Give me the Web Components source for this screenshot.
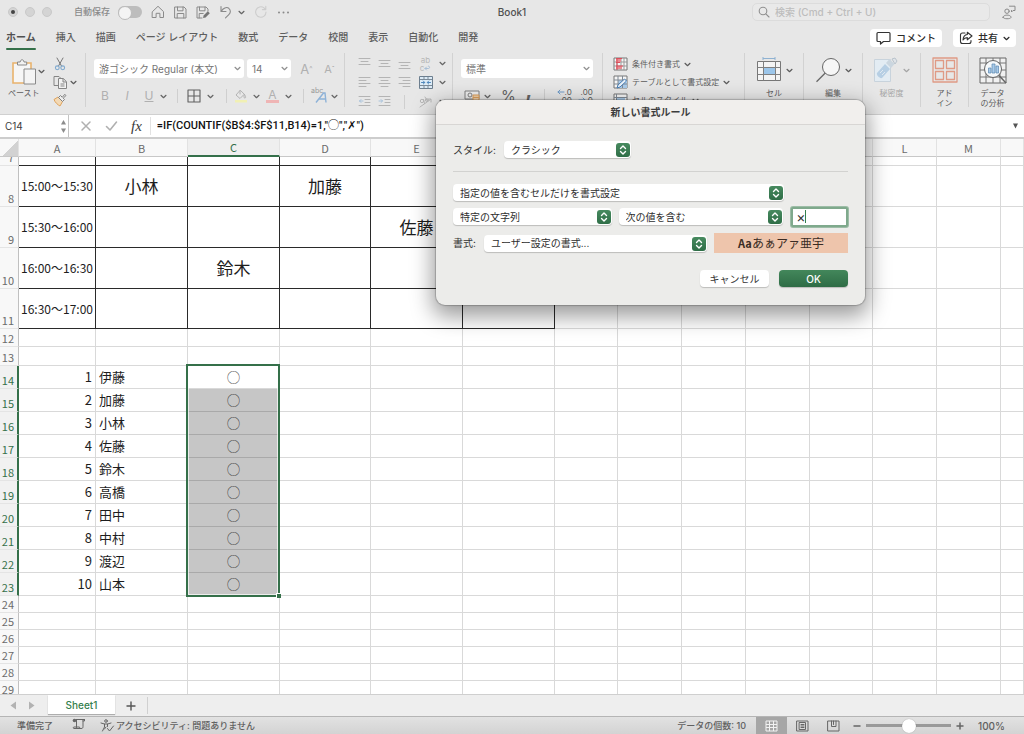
<!DOCTYPE html>
<html lang="ja">
<head>
<meta charset="utf-8">
<meta name="viewport" content="width=device-width, initial-scale=1">
<title>Book1</title>
<style>
html,body{margin:0;height:100%;overflow:hidden}
body{font:10px/14px "Inter","Noto Sans CJK JP",sans-serif;color:#4a4a4a;background:#e7e7e7}
</style>
</head>
<body>
<xl-app></xl-app>
<script>
const base = `
*{box-sizing:border-box}
button{font:inherit;color:inherit;background:none;border:0;padding:0;margin:0;display:inline-flex;align-items:center;justify-content:center;white-space:nowrap}
select,input{font:inherit;color:inherit;margin:0;outline:0}
[hidden]{display:none}
`;
const define = (name, css, html) => {
  const t = document.createElement('template');
  t.innerHTML = `<style>${base}${css}</style>${html}`;
  customElements.define(name, class extends HTMLElement {
    constructor() {
      super();
      this.attachShadow({mode: 'open'}).append(t.content.cloneNode(true));
    }
  });
};

/* Icons: [width, height, svg body] */
const S = (c, body, w = 1) => `<g fill="none" stroke="${c}" stroke-width="${w}" stroke-linecap="round" stroke-linejoin="round">${body}</g>`;
const lines = (a) => S('#b4b4b4', a.map(([x1, x2, y]) => `<path d="M${x1} ${y}H${x2}"/>`).join(''));
const icons = {
  chev: [7, 7, S('currentColor', '<path d="M1 2.3l2.5 2.4L6 2.3"/>', 1.2)],
  home: [14, 14, S('#8a8a8a', '<path d="M1.500 6.600L7 1.300l5.500 5.300V12.500H8.900V8.300H5.100v4.200H1.500z"/>')],
  save: [13, 13, S('#8a8a8a', '<path d="M1 1h9l2 2v9H1z"/><path d="M3.500 1v3.800h5.500V1M3.200 12V7.500h6.600V12"/>')],
  saveas: [14, 13, S('#8a8a8a', '<path d="M6 12H1V1h9l2 2v2"/><path d="M3.500 1v3.800h5.500V1M3.200 12V7.500h4"/>') + '<path d="M7 12l.6-2.600L11.800 5.200l2 2L9.600 11.400z" fill="#777"/>'],
  undo: [14, 14, S('#8a8a8a', '<path d="M2 1.500v5h5M2.300 6.200C4 3.300 7.500 1.500 9.800 3.300c2.400 2 1.700 4.700 0 6.300L6.500 12.800"/>', 1.1)],
  redo: [14, 14, S('#cdcdcd', '<path d="M12 7a5.200 5.200 0 1 1-2-4.100L11.500 4.500M11.800 1.200v3.400H8.400"/>', 1.1)],
  dots: [13, 5, '<g fill="#8a8a8a"><circle cx="2" cy="2.500" r="1"/><circle cx="6.500" cy="2.500" r="1"/><circle cx="11" cy="2.500" r="1"/></g>'],
  search: [12, 12, S('#909090', '<circle cx="5" cy="5" r="3.800"/><path d="M7.800 7.800L11 11"/>', 1.1)],
  person: [14, 15, S('#8a8a8a', '<circle cx="5" cy="6.200" r="2.200"/><path d="M1 12.300c0-3 8-3 8 0 0 2-8 2-8 0zM7.500 1.200h5.500v4.300h-2L9.500 7V5.500"/>')],
  comment: [15, 14, S('#333', '<path d="M2 1.500h11c.6 0 1 .4 1 1v7c0 .6-.4 1-1 1H7.500L4.500 13v-2.500H2c-.6 0-1-.4-1-1v-7c0-.6.400-1 1-1z"/>', 1.2)],
  share: [14, 14, S('#333', '<path d="M6 2H3.500C2.300 2 1.500 2.800 1.500 4v6.500c0 1.200.8 2 2 2H10c1.200 0 2-.8 2-2V9.500"/><path d="M8.300 1.200L13 5 8.300 8.800V6.600C6.300 6.600 5 7.400 4 9c.2-3 1.600-5.200 4.300-5.500z"/>', 1.1)],
  paste: [26, 26, '<path d="M2 4h18v20H2z" fill="#f6f6f6" stroke="#e9b36d" stroke-width="1.600"/><path d="M6.500 6V3h2.700c.3-3 3.500-3 3.800 0h2.700v3z" fill="#f2f2f2" stroke="#8a8a8a"/><path d="M13 10h11.500v15H13z" fill="#f4f4f4" stroke="#8a8a8a"/>'],
  cut: [12, 14, S('#777', '<path d="M3 1l4.500 8M9 1L4.500 9"/>') + S('#7fa9cf', '<circle cx="3.300" cy="10.800" r="1.900"/><circle cx="8.700" cy="10.800" r="1.900"/>', 1.1)],
  copy: [15, 14, S('#858585', '<path d="M5 10.500H1v-9h5l2 2"/>') + '<path d="M5.500 3.500h4.800l3.200 3.200v6.800h-8zM10 3.700V7h3.300M7.500 9h4M7.500 11h4" fill="#f2f2f2" stroke="#858585"/>'],
  brush: [14, 14, '<path d="M1 6.500l4-2.500 4.500 4.500L7 13C5 12 2 9.500 1 6.500z" fill="#f3d9b5" stroke="#dfa35c"/><path d="M5.500 4.500l2-2L9.300 4.300 11.800 1.300l1.200 1.200L10.200 5.200l1.300 1.300-2 2z" fill="#eee" stroke="#808080"/>'],
  borders: [14, 14, S('#606060', '<path d="M1 1h12v12H1zM7 1v12M1 7h12"/>', 1.1)],
  fill: [14, 14, S('#b4b4b4', '<path d="M6 1.500L2 6l4 3.500L10 5.500zM6 1.500V5M10.500 5.500c1.500 2 1.500 3.500.3 3.500s-1-1.500-.3-3.500"/>') + '<path d="M1 11h12v2.500H1z" fill="#f1f0b4"/>'],
  phonetic: [16, 16, '<path d="M3 14.500L10.500 5h1.500l1 9.500M6 11h6.500" fill="none" stroke="#8db2d8" stroke-width="1.400"/>'],
  alT: [13, 13, lines([[1, 12, 1.5], [3, 10, 4.5], [1, 12, 7.5]])],
  alM: [13, 13, lines([[1, 12, 3.5], [3, 10, 6.5], [1, 12, 9.5]])],
  alB: [13, 13, lines([[1, 12, 5.5], [3, 10, 8.5], [1, 12, 11.5]])],
  alL: [13, 13, lines([[1, 12, 1.5], [1, 8, 4.5], [1, 12, 7.5], [1, 8, 10.5]])],
  alC: [13, 13, lines([[1, 12, 1.5], [3, 10, 4.5], [1, 12, 7.5], [3, 10, 10.5]])],
  alR: [13, 13, lines([[1, 12, 1.5], [5, 12, 4.5], [1, 12, 7.5], [5, 12, 10.5]])],
  outdent: [13, 13, lines([[1, 12, 1.5], [7, 12, 4.5], [7, 12, 7.5], [1, 12, 10.5]]) + S('#a9c3dc', '<path d="M5 6H1.500M3 4.500L1.500 6 3 7.500"/>')],
  indent: [13, 13, lines([[1, 12, 1.5], [7, 12, 4.5], [7, 12, 7.5], [1, 12, 10.5]]) + S('#a9c3dc', '<path d="M1 6h3.500M3 4.500L4.500 6 3 7.500"/>')],
  wrapArrow: [7, 6, S('#a9bfd6', '<path d="M1 3.500h3.500c1.500 0 1.500-2.500 0-2.500M2.500 2L1 3.500 2.500 5"/>')],
  merge: [14, 13, '<path d="M.5.5h13v12H.5z" fill="#dcebf6" stroke="#6d7f8f"/><path d="M1 3.500h12M1 9.500h12M5 1v2.500M9 1v2.500M5 9.500V12M9 9.500V12" stroke="#7c8b98"/>' + S('#4f88bd', '<path d="M2.500 6.500h3M8.500 6.500h3M4.300 5L5.800 6.500 4.300 8M9.700 5L8.200 6.500 9.700 8"/>')],
  orient: [15, 13, S('#b8b8b8', '<path d="M2 12L12.500 4.500M10 4h3v3"/><circle cx="4" cy="6" r="1.700"/><path d="M5.500 4.500l1 4M7 2l2.500 4"/><circle cx="8.800" cy="5" r="1.400"/>')],
  currency: [16, 12, '<path d="M1 1h14v8H1z" fill="#eee" stroke="#808080"/><circle cx="6" cy="5" r="2" fill="none" stroke="#808080"/><path d="M9 5h6v6H9z" fill="#f0cfa6" stroke="#dd9f5b"/><path d="M9 7.500h6" stroke="#dd9f5b"/>'],
  cond: [15, 14, '<path d="M1 1h13v12H1z" fill="#f6f6f6" stroke="#777"/><path d="M4 1v12M8 1v12M11 1v12M1 5h13M1 9h13" stroke="#999"/><path d="M3 2h5v3H3zM3 9h6v3H3z" fill="#e98b92"/><path d="M4 1v12M3 1.500h6M3 5.500h4M3 9h7" stroke="#d9505c"/>'],
  tstyle: [15, 14, '<path d="M1 1h13v12H1z" fill="#f6f6f6" stroke="#777"/><path d="M5 5h9v8H5z" fill="#a9cbea"/><path d="M5 1v12M9.500 1v12M1 5h13M1 9h13" stroke="#808a95"/><path d="M4 13l1-3 6.500-6 2 2L7 12z" fill="#e8f0f8" stroke="#4a7fb5"/>'],
  cstyle: [15, 14, '<path d="M1 1h13v12H1z" fill="#f6f6f6" stroke="#777"/><path d="M3 5h9v6H3z" fill="#a9cbea"/><path d="M1 4.500h13M3.500 1v12" stroke="#808a95"/>'],
  cells: [26, 26, '<path d="M1.500 4.500h23v19h-23z" fill="#f4f4f4" stroke="#777"/><path d="M8 10h11v7H8z" fill="#9cc6ea"/><path d="M7.500 4.500v19M19.500 4.500v19M1.500 10.500h23M1.500 17.500h23" stroke="#808080"/><path d="M7 1.500h12M7 0v3M19 0v3" stroke="#8fb2d2"/>'],
  find: [26, 26, '<circle cx="16" cy="10" r="8.500" fill="#f6f6f6" stroke="#666"/><path d="M10 16.200L1.500 24.800" stroke="#666" stroke-width="1.300"/>'],
  sens: [26, 26, '<path d="M1.500 2.500h16v22h-16z" fill="#e3ecf3" stroke="#c8d3dc"/><path d="M4 16L12 7l5 5-8 9c-2 1-6-3-5-5z" fill="#b7cfe4"/><path d="M13 6l3.500-4 5 5L18 11z" fill="#cbd6df"/><path d="M19 2l3-1 2 3-2 3z" fill="#e0e4e8" stroke="#b9c3cc"/><path d="M7 16l3-3M9 18l3-3" stroke="#dfe9f2"/>'],
  addin: [26, 26, S('#df9a85', '<path d="M1 1h24v24H1z"/><path d="M3.500 3.500h8v8h-8zM14.500 3.500h8v8h-8zM3.500 14.500h8v8h-8zM14.500 14.500h8v8h-8z"/>', 1.3)],
  analyze: [28, 28, '<path d="M1 1h26v25H1z" fill="#f1f1f1" stroke="#666"/><path d="M1 6h26M1 13h26M1 20h26M7 1v25M14 1v25M21 1v25" stroke="#777"/><circle cx="14" cy="12" r="8.500" fill="#f5f8fa" stroke="#666"/><path d="M20 18.500L27 26" stroke="#666" stroke-width="1.500"/><path d="M9.500 11h2.500v5H9.500zM13 7h3v9h-3zM17 9h2.500v7H17z" fill="#a9cbea" stroke="#5a86b0" stroke-width=".7"/>'],
  decDown: [8, 6, S('#6f9cc9', '<path d="M7 3H1M3 1L1 3l2 2"/>')],
  decUp: [8, 6, S('#6f9cc9', '<path d="M1 3h6M5 1l2 2-2 2"/>')],
  x: [12, 12, S('#b0b0b0', '<path d="M2 2l8 8M10 2l-8 8"/>', 1.5)],
  check: [13, 12, S('#b0b0b0', '<path d="M1.500 6.500L5 10l6.500-8"/>', 1.6)],
  stepUp: [7, 6, '<path d="M1 5.500h5L3.500 1z" fill="#8c8c8c"/>'],
  stepDown: [7, 6, '<path d="M1 .5h5L3.500 5z" fill="#8c8c8c"/>'],
  down: [7, 6, '<path d="M1 .5h5L3.500 5.500z" fill="#555"/>'],
  left: [8, 9, '<path d="M7 .5v8L1.500 4.500z" fill="#b2b2b2"/>'],
  right: [8, 9, '<path d="M1 .5v8l5.500-4z" fill="#b2b2b2"/>'],
  plus: [10, 10, S('#555', '<path d="M5 1v8M1 5h8"/>', 1.4)],
  zin: [8, 8, S('#666', '<path d="M4 1v6M1 4h6"/>', 1.5)],
  zout: [8, 8, S('#666', '<path d="M1 4h6"/>', 1.5)],
  macro: [14, 12, S('#666', '<path d="M4 1.500h8.500M4.500 1.500v8M11 1.500v7c0 1.500-.5 2-2 2H2c-1 0-1-1.500 0-1.500h5.500c0 1 .5 1.500 1.500 1.500M12.500 1.500v1.500H11"/>') + '<circle cx="2.500" cy="2.500" r="1.800" fill="#666"/>'],
  a11y: [15, 13, S('#666', '<circle cx="6" cy="2" r="1.300"/><path d="M1 4l3.500 1v3L2.500 12M11 4L7.500 5v2.500M4.500 5h3M6 8L4.500 10M7.500 9.500L9.500 12l4-5"/>')],
  vNormal: [13, 12, '<path d="M1 1h11v10H1zM4.500 1v10M8.500 1v10M1 4.500h11M1 7.500h11" fill="none" stroke="#f2f2f2"/>'],
  vPage: [13, 12, S('#666', '<path d="M1 1h11v10H1z"/><path d="M3.500 2.500h6v7h-6zM5 4.500h3M5 6h3M5 7.500h3"/>')],
  vBreak: [13, 12, S('#666', '<path d="M1 1h11v10H1zM4.500 1v5.500H9V1M6.500 1v3.500"/>')],
  updown: [14, 14, '<path d="M4.500 5.500L7 3l2.500 2.500M4.500 8.500L7 11l2.500-2.500" fill="none" stroke="#fff" stroke-width="1.400" stroke-linecap="round" stroke-linejoin="round"/>']
};
customElements.define('xl-icon', class extends HTMLElement {
  constructor() { super(); this.attachShadow({mode: 'open'}); }
  connectedCallback() {
    const [w, h, body] = icons[this.getAttribute('name')];
    this.shadowRoot.innerHTML = `<style>:host{display:inline-flex;flex:none}svg{display:block}</style><svg width="${w}" height="${h}" viewBox="0 0 ${w} ${h}" aria-hidden="true">${body}</svg>`;
  }
});
const I = (n) => `<xl-icon name="${n}"></xl-icon>`;
const B = (n, label) => `<button aria-label="${label}">${I(n)}</button>`;

/* Title bar */
define('xl-titlebar', `
:host{display:grid;grid-template-columns:1fr auto 1fr;align-items:center;height:24px;padding:0 8px}
.left{display:flex;align-items:center}
.dot{width:10px;height:10px;border-radius:50%;background:#d4d4d4;border:1px solid #c9c9c9;margin-right:7px;display:grid;place-items:center}
.dot i{width:4px;height:4px;border-radius:50%;background:#444}
label{display:flex;align-items:center;gap:8px;margin:0 9px 0 15px;color:#8a8a8a;font-size:9px;font-weight:500;white-space:nowrap}
label input{appearance:none;width:24px;height:12px;border-radius:6px;background:#bdbdbd;position:relative}
label input::before{content:"";position:absolute;left:0;top:0;width:12px;height:12px;border-radius:50%;background:#f4f4f4;border:1px solid #bbb}
.tools{display:flex;align-items:center;gap:9px;color:#666}
.undo{display:flex;align-items:center;gap:5px}
h1{font-size:10px;line-height:14px;font-weight:500;margin:0;color:#4f4f4f}
.right{display:flex;justify-content:flex-end;align-items:center;gap:12px}
.search{display:flex;align-items:center;gap:5px;width:238px;height:18px;padding:0 6px 0 5px;border:1px solid #dcdcdc;border-radius:5px;background:#e9e9e9}
.search input{border:0;background:none;padding:0;flex:1;min-width:0}
.search input::placeholder{color:#bdbdbd;font-weight:500}
`, `
<div class="left">
  <span class="dot"><i></i></span><span class="dot"></span><span class="dot"></span>
  <label>自動保存<input type="checkbox" role="switch"></label>
  <div class="tools">${B('home','ホーム')}${B('save','保存')}${B('saveas','名前を付けて保存')}
  <span class="undo">${B('undo','元に戻す')}${B('chev','履歴')}</span>${B('redo','やり直し')}${B('dots','その他')}</div>
</div>
<h1>Book1</h1>
<div class="right"><div class="search">${I('search')}<input type="search" aria-label="検索" placeholder="検索 (Cmd + Ctrl + U)"></div>${B('person','アカウント')}</div>`);

/* Ribbon tabs */
define('xl-tabs', `
:host{display:flex;align-items:center;justify-content:space-between;height:28px;padding:0 8px 0 6px}
nav{display:flex;gap:20px}
a{color:#5e5e5e;text-decoration:none;font-weight:500;line-height:14px;padding:5px 0 7px;white-space:nowrap}
a.on{font-weight:700;color:#505050;position:relative}
a.on::after{content:"";position:absolute;left:0;right:0;bottom:1px;height:2px;border-radius:1px;background:#35704a}
.acts{display:flex;gap:11px;color:#2c2c2c;font-weight:500}
.acts button{height:18px;border-radius:4px;background:#fff;padding:0 6px;gap:5px}
`, `
<nav><a class="on" href="#home">ホーム</a><a href="#insert">挿入</a><a href="#draw">描画</a><a href="#layout">ページ レイアウト</a><a href="#formulas">数式</a><a href="#data">データ</a><a href="#review">校閲</a><a href="#view">表示</a><a href="#automate">自動化</a><a href="#developer">開発</a></nav>
<div class="acts"><button>${I('comment')}コメント</button><button>${I('share')}共有 ${I('chev')}</button></div>`);

/* Ribbon group: a box with a divider on its right side */
define('xl-group', `
:host{display:flex;flex:none;border-right:1px solid #d2d2d2;height:54px}
:host([last]){border-right:0;flex:1}
`, `<slot></slot>`);

/* Large ribbon button with caption */
define('xl-big', `
:host{display:flex;justify-content:center;width:100%}
button{flex-direction:column;justify-content:flex-start;font-size:8px;line-height:10px;height:100%;padding-top:4px;gap:3px}
.top{display:flex;align-items:center;gap:4px}
:host([faded]) button{color:#a5a5a5}
:host([tall]) button{gap:1px}
`, `<button><span class="top"><slot name="icon"></slot></span><slot></slot></button>`);

/* Drop-downs: a real select whose first option comes from the value attribute */
const defineSelect = (name, css, html) => {
  const t = document.createElement('template');
  t.innerHTML = `<style>${base}${css}</style>${html}`;
  customElements.define(name, class extends HTMLElement {
    constructor() { super(); this.attachShadow({mode: 'open'}).append(t.content.cloneNode(true)); }
    connectedCallback() {
      const r = this.shadowRoot, s = r.querySelector('select'), l = r.querySelector('label');
      s.add(new Option(this.getAttribute('value')));
      if (this.hasAttribute('label')) l.textContent = this.getAttribute('label');
      else { l.hidden = true; s.setAttribute('aria-label', this.getAttribute('name')); }
    }
  });
};
defineSelect('xl-field', `
:host{display:flex}
.box{position:relative;flex:1}
select{appearance:none;display:block;width:100%;height:19px;border:0;border-radius:3px;background:#fff;padding:0 18px 0 5px;color:#747474}
xl-icon{position:absolute;right:3px;top:6px;color:#909090;pointer-events:none}
`, `<label for="s"></label><div class="box"><select id="s"></select>${I('chev')}</div>`);
defineSelect('xl-popup', `
:host{display:flex;align-items:center;gap:8px}
.box{position:relative;flex:1}
select{appearance:none;display:block;width:100%;height:17px;border:0;border-radius:4px;background:#fff;padding:0 20px 0 7px;color:#2e2e2e;box-shadow:0 1px 1px #0003}
xl-icon{position:absolute;right:1px;top:2px;border-radius:3px;background:linear-gradient(#478a5f,#2f6e47);pointer-events:none}
`, `<label for="s"></label><div class="box"><select id="s"></select>${I('updown')}</div>`);

/* Ribbon */
define('xl-ribbon', `
:host{display:flex;height:62px;padding-top:1px;overflow:hidden;color:#5c5c5c}
.paste{width:85px;padding-left:8px;display:flex}
.paste>button{flex-direction:column;font-size:8px;line-height:10px;justify-content:flex-start;padding-top:6px;gap:3px}
.paste>.pcol{padding:0;margin:15px 8px 0 -2px;height:8px}
.clip{display:grid;grid-template-columns:15px 12px;grid-auto-rows:18px;align-items:center;justify-items:center;padding-top:2px}
.font{width:258px;padding:6px 0 0 8px}
.row{display:flex;align-items:center}
.row2{height:20px;margin-top:8px}
.font .a{gap:3px;color:#b0b0b0}
.font .n{width:150px}.font .z{width:44px}
.fs{font-size:13px;margin-left:4px;width:17px}.fs+.fs{font-size:11px;margin-left:3px}.fs sup{font-size:7px}
.t{width:22px;color:#b0b0b0;font-size:12px}
.c{color:#666;width:10px}
.bar{width:1px;height:14px;background:#cfcfcf}
.al{width:107px;padding:1px 0 0 9px;display:grid;grid-template-columns:20px 20px 20px 23px 10px;grid-auto-rows:19px;align-items:center;justify-items:center;color:#666;height:54px}
.wrap{flex-direction:column;font-size:8px;line-height:8px;color:#b8b8b8}
.wrap span{display:flex;align-items:center;height:8px}
.num{width:149px;padding:6px 9px 0 8px}
.pc{font-size:15px;color:#666}
.pc.comma{width:26px;font-weight:700;font-size:20px;height:20px;line-height:14px;padding-bottom:9px;align-items:flex-end}
.dec{flex-direction:column;align-items:flex-end;font-size:8px;line-height:8px;color:#5c5c5c;width:21px}
.dec span{display:flex;align-items:center}
.st{width:141px;padding:2px 0 0 10px;font-size:8px}
.st button{display:flex;height:18px;gap:4px}
.w58{width:58px;display:flex}.w57{width:57px;display:flex}.w47{width:47px;display:flex}
.color{flex-direction:column;line-height:11px;font-size:12px;color:#b0b0b0}
.color::after{content:"";width:13px;height:3px;background:#efb5b5}
.ph{position:relative}.ph span{position:absolute;left:-2px;top:-4px;font-size:7px;color:#999}
`, `
<xl-group><div class="paste">
  <button>${I('paste')}<span>ペースト</span></button><button class="pcol" aria-label="貼り付けオプション">${I('chev')}</button>
  <div class="clip">${B('cut','切り取り')}<i></i>${B('copy','コピー')}${I('chev')}${B('brush','書式のコピー')}</div>
</div></xl-group>
<xl-group><div class="font">
  <div class="row a"><xl-field class="n" name="フォント" value="游ゴシック Regular (本文)"></xl-field><xl-field class="z" name="サイズ" value="14"></xl-field><button class="fs">A<sup>^</sup></button><button class="fs">A<sup>ˇ</sup></button></div>
  <div class="row row2"><button class="t">B</button><button class="t"><i>I</i></button><button class="t"><u>U</u></button><span class="c">${I('chev')}</span>
   <span class="bar" style="margin:0 9px 0 7px"></span>${B('borders','罫線')}<span class="c" style="margin:0 9px 0 6px">${I('chev')}</span><span class="bar"></span>
   <span style="width:7px"></span>${B('fill','塗りつぶし')}<span class="c" style="margin:0 3px 0 5px">${I('chev')}</span><button class="color">A</button><span class="c" style="margin:0 8px 0 6px">${I('chev')}</span><span class="bar"></span>
   <button class="ph" style="margin-left:9px" aria-label="ふりがな"><span>abc</span>${I('phonetic')}</button><span class="c" style="margin-left:2px">${I('chev')}</span></div>
</div></xl-group>
<xl-group><div class="al">
  ${B('alT','上揃え')}${B('alM','上下中央')}${B('alB','下揃え')}<button class="wrap"><span>ab</span><span>c${I('wrapArrow')}</span></button>${I('chev')}
  ${B('alL','左揃え')}${B('alC','中央揃え')}${B('alR','右揃え')}${B('merge','セルを結合')}${I('chev')}
  ${B('outdent','インデント解除')}${B('indent','インデント')}<span class="bar"></span>${B('orient','方向')}${I('chev')}
</div></xl-group>
<xl-group><div class="num">
  <xl-field name="表示形式" value="標準"></xl-field>
  <div class="row row2"><span style="width:3px"></span>${B('currency','通貨')}<span class="c" style="margin:0 7px 0 4px">${I('chev')}</span><button class="pc">%</button><button class="pc comma">,</button><span class="bar" style="margin:0 6px 0 2px"></span>
  <button class="dec"><span>${I('decDown')}.0</span><span>.00</span></button><button class="dec"><span>.00</span><span>${I('decUp')}.0</span></button></div>
</div></xl-group>
<xl-group><div class="st">
  <button>${I('cond')}<span>条件付き書式</span>${I('chev')}</button>
  <button>${I('tstyle')}<span>テーブルとして書式設定</span>${I('chev')}</button>
  <button>${I('cstyle')}<span>セルのスタイル</span>${I('chev')}</button>
</div></xl-group>
<xl-group><div class="w58"><xl-big><span slot="icon">${I('cells')}</span><span slot="icon">${I('chev')}</span>セル</xl-big></div></xl-group>
<xl-group><div class="w58"><xl-big><span slot="icon">${I('find')}</span><span slot="icon">${I('chev')}</span>編集</xl-big></div></xl-group>
<xl-group><div class="w57"><xl-big faded><span slot="icon">${I('sens')}</span><span slot="icon">${I('chev')}</span>秘密度</xl-big></div></xl-group>
<xl-group><div class="w47"><xl-big><span slot="icon">${I('addin')}</span><span>アド<br>イン</span></xl-big></div></xl-group>
<xl-group last><div class="w47"><xl-big tall><span slot="icon">${I('analyze')}</span><span>データ<br>の分析</span></xl-big></div></xl-group>`);

/* Formula bar */
define('xl-formula-bar', `
:host{display:flex;height:25px;border-top:1px solid #d0d0d0;border-bottom:2px solid #cdcdcd;background:#fff}
.name{width:69px;display:flex;align-items:center;border-right:1px solid #c4c4c4;padding:0 1px 0 5px}
.name input{border:0;padding:0;background:none;color:#3c3c3c;flex:1;min-width:0}
.step{display:flex;flex-direction:column;gap:3px}
.btns{display:flex;align-items:center;padding-left:11px;gap:13px}
.fx{font:italic 15px/18px "Liberation Serif",serif;color:#3a3a3a;border-right:1px solid #e2e2e2;padding-right:8px}
.f{flex:1;border:0;padding:0 0 0 6px;min-width:0;background:none;color:#111;font-family:Roboto,"Noto Sans CJK JP","DejaVu Sans",sans-serif;font-size:11px;font-weight:500}
.more{width:18px}
`, `
<div class="name"><input aria-label="名前ボックス" value="C14"><span class="step">${I('stepUp')}${I('stepDown')}</span></div>
<div class="btns">${B('x','キャンセル')}${B('check','入力')}<button class="fx">fx</button></div>
<input class="f" aria-label="数式" value='=IF(COUNTIF($B$4:$F$11,B14)=1,"◯","✗")'>
<button class="more" aria-label="数式バーの展開">${I('down')}</button>`);

/* Worksheet */
const cols = 'ABCDEFGHIJKLM'.split('');
const widths = [19, 77, 92, 92, 91, 92, 92, 63, 64, 64, 64, 63, 64, 64];
const times = {8: '15:00〜15:30', 9: '15:30〜16:00', 10: '16:00〜16:30', 11: '16:30〜17:00'};
const shifts = {B8: '小林', D8: '加藤', E9: '佐藤', C10: '鈴木'};
const people = ['伊藤', '加藤', '小林', '佐藤', '鈴木', '高橋', '田中', '中村', '渡辺', '山本'];
const rowClass = (r) => r === 7 ? 'r7' : r < 12 ? 'tall' : r < 14 ? 'gap' : r < 24 ? 'list' : 'std';
let rows = '';
for (let r = 7; r < 30; r++) {
  rows += `<tr class="${rowClass(r)}"><th scope="row"><div>${r}</div></th>`;
  [...cols, 'N'].forEach((c, i) => {
    let v = shifts[c + r] || '', k = r < 12 && i < 6 ? 'grid' : '';
    if (c === 'A' && times[r]) v = times[r];
    if (r > 13 && r < 24) {
      if (c === 'A') { v = r - 13; k = 'no'; }
      if (c === 'B') { v = people[r - 14]; k = 'nm'; }
      if (c === 'C') { v = '◯' + (r === 14 ? '<div class="sel"></div>' : ''); k = r === 14 ? 'first' : 'picked'; }
    }
    rows += `<td class="${k}${c === 'A' && times[r] ? ' time' : ''}">${v}</td>`;
  });
  rows += '</tr>';
}
define('xl-sheet', `
:host{display:block;flex:1;min-height:0;overflow:hidden;background:#fff;font-family:"Noto Sans CJK JP",sans-serif}
table{table-layout:fixed;width:100%;border-collapse:separate;border-spacing:0}
th,td{padding:0;border:0 solid #d9d9d9;border-width:0 1px 1px 0;overflow:hidden;white-space:nowrap;text-align:center;vertical-align:middle;font-size:13px;line-height:16px;color:#1d1d1d}
thead th{height:18px;font-size:11px;font-weight:400;color:#6b6b6b;background:#f8f8f8;border-color:#e2e2e2;border-bottom-color:#c8c8c8}
thead th.on{color:#35704a;background:#efefef;border-bottom:2px solid #35704a}
thead th:first-child{background:linear-gradient(135deg,#f8f8f8 55%,#d2d2d2 55%)}
tbody th{vertical-align:bottom;font-size:11px;font-weight:400;color:#6b6b6b;background:#f8f8f8;border-right-color:#c0c0c0;border-bottom-color:#e4e4e4;text-align:right;padding-right:4px}
tbody th div{line-height:16px}
.r7{height:9px}.r7 th div{height:8px;display:flex;align-items:flex-end;justify-content:flex-end;overflow:hidden}.r7 td{font-size:0;line-height:0}
.tall{height:41px}.tall td{font-size:17px;line-height:24px}.tall td.time{font-size:12px}
.tall:nth-child(5){height:40px}
.gap{height:18px}.gap+.gap{height:19px}
.list{height:23px}.list th{color:#35704a;border-right:2px solid #35704a;padding-right:3px;background:#f1f1f1}
.list td{padding-bottom:1px}
.std td,.gap td{line-height:14px}.std{height:17px}
td.grid{border-color:#2a2a2a}
td.no{text-align:right;padding-right:3px}
td.nm{text-align:left;padding-left:3px}
td.picked{background:#c6c6c6;border-bottom-color:#a9a9a9}
td.first{position:relative;overflow:visible}
.sel{position:absolute;left:-2px;top:-2px;width:94px;height:233px;border:2px solid #35704a;box-shadow:inset 0 0 0 1px #ffffffb0}
.sel::after{content:"";position:absolute;right:-3px;bottom:-3px;width:4px;height:4px;background:#35704a;border:1px solid #fff;border-width:1px 0 0 1px;box-sizing:content-box}
`, `<table><colgroup>${widths.map(w => `<col style="width:${w}px">`).join('')}<col></colgroup>
<thead><tr><th></th>${cols.map(c => `<th scope="col"${c === 'C' ? ' class="on"' : ''}>${c}</th>`).join('')}<th></th></tr></thead><tbody>${rows}</tbody></table>`);

/* Sheet tabs */
define('xl-sheet-tabs', `
:host{display:flex;height:22px;background:#eee;border-top:1px solid #cfcfcf;align-items:stretch}
.nav{display:flex;width:48px;padding-left:9px;gap:11px}
a{background:#fff;color:#35804c;font-weight:500;text-decoration:none;width:67px;text-align:center;line-height:20px;height:19px;box-shadow:0 1px 1px #0004}
.add{width:33px;border-right:1px solid #d0d0d0;height:17px;align-self:center}
`, `<div class="nav">${B('left','前のシート')}${B('right','次のシート')}</div><a href="#sheet1">Sheet1</a><button class="add" aria-label="シートの追加">${I('plus')}</button>`);

/* Status bar */
define('xl-status', `
:host{display:flex;align-items:center;height:18px;border-top:1px solid #b5b5b5;background:linear-gradient(#e2e2e2,#d3d3d3);font-size:9px;font-weight:500;color:#606060;padding:0 18px 0 17px;white-space:nowrap}
.macro{margin:0 14px 0 19px}
.acc{gap:1px}
.sum{margin-left:auto;margin-right:10px}
.v{width:31px;height:17px}
.v.on{background:#a6a6a6}
.zoom{display:flex;align-items:center;gap:5px;margin-left:4px}
input{appearance:none;width:85px;height:14px;background:linear-gradient(#999,#999) center/100% 3px no-repeat}
input::-webkit-slider-thumb{appearance:none;width:14px;height:14px;border-radius:50%;background:#fff;box-shadow:0 0 1px #0005}
.pct{width:28px;margin-left:14px;font-size:10px}
`, `<span>準備完了</span><span class="macro">${B('macro','マクロの記録')}</span><button class="acc">${I('a11y')}アクセシビリティ: 問題ありません</button>
<span class="sum">データの個数: 10</span><button class="v on" aria-label="標準">${I('vNormal')}</button><button class="v" aria-label="ページ レイアウト">${I('vPage')}</button><button class="v" aria-label="改ページ">${I('vBreak')}</button>
<div class="zoom">${B('zout','縮小')}<input type="range" aria-label="ズーム" min="0" max="200" value="100">${B('zin','拡大')}</div><span class="pct">100%</span>`);

/* Formatting rule dialog */
define('xl-rule-dialog', `
:host{display:block;width:429px;border-radius:9px;background:#ececea;color:#333;box-shadow:0 0 1px 1px #0003,0 8px 22px 3px #0006;overflow:hidden}
h2{margin:0;height:25px;font-size:10px;line-height:24px;font-weight:700;text-align:center;background:#f1efed;border-bottom:1px solid #d8d6d4;color:#3d3d3d}
form{padding:16px 17px 18px}
.style{width:178px}
hr{border:0;height:1px;background:#d2d2d0;margin:13px 0 12px}
.row{display:flex;align-items:center;gap:7px}
.rule{width:331px}
.second{margin-top:7px;height:17px}
.type{width:159px}.cond{width:165px}
.val{width:57px;height:20px;margin-left:1px;border:2px solid #7fa98c;border-radius:2px;box-shadow:0 0 0 1px #9dbda7;background:#fff;padding:0 3px;display:flex;align-items:center}
.val input{border:0;padding:0;width:9px;background:none;height:14px;line-height:14px;font-size:14px}
.val::after{content:"";width:1px;height:13px;background:#35804c}
.third{margin-top:8px;height:20px}
.fmt{width:254px}
output{flex:1;height:20px;background:#eec5ac;text-align:center;line-height:20px;font-size:12px;color:#3a2c24;font-family:"Noto Sans CJK JP",sans-serif}
output b{font-size:11px}
.end{justify-content:flex-end;gap:10px;margin-top:17px}
.end button{width:69px;height:17px;border-radius:4px;background:#fff;color:#333;box-shadow:0 1px 1px #0003}
.end .ok{background:linear-gradient(#43875b,#2e6c45);color:#fff;font-weight:500}
`, `
<h2>新しい書式ルール</h2>
<form>
  <xl-popup class="style" label="スタイル:" value="クラシック"></xl-popup>
  <hr>
  <xl-popup class="rule" name="ルールの種類" value="指定の値を含むセルだけを書式設定"></xl-popup>
  <div class="row second"><xl-popup class="type" name="対象" value="特定の文字列"></xl-popup><xl-popup class="cond" name="条件" value="次の値を含む"></xl-popup><span class="val"><input aria-label="値" value="×"></span></div>
  <div class="row third"><xl-popup class="fmt" label="書式:" value="ユーザー設定の書式..."></xl-popup><output><b>Aa</b>あぁアァ亜宇</output></div>
  <div class="row end"><button type="button">キャンセル</button><button type="button" class="ok">OK</button></div>
</form>`);

define('xl-app', `
:host{display:flex;flex-direction:column;height:100vh;position:relative;overflow:hidden;background:#e7e7e7}
xl-titlebar,xl-tabs,xl-ribbon,xl-formula-bar,xl-sheet-tabs,xl-status{flex:none}
xl-rule-dialog{position:absolute;left:436px;top:100px}
`, `<xl-titlebar></xl-titlebar><xl-tabs></xl-tabs><xl-ribbon></xl-ribbon><xl-formula-bar></xl-formula-bar><xl-sheet></xl-sheet><xl-sheet-tabs></xl-sheet-tabs><xl-status></xl-status><xl-rule-dialog role="dialog"></xl-rule-dialog>`);
</script>
</body>
</html>
